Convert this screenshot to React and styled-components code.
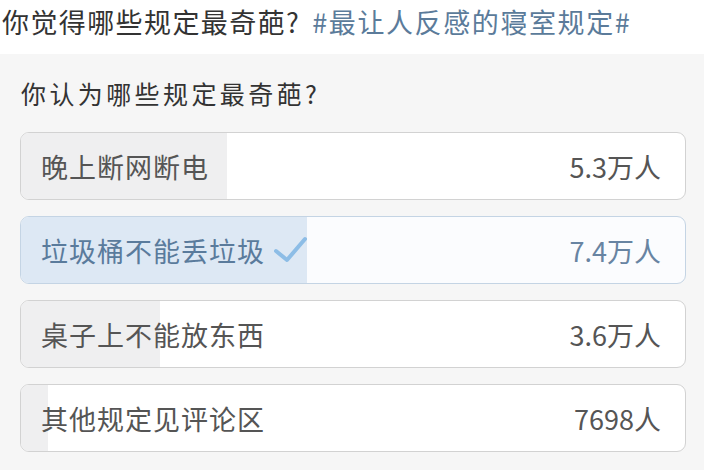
import React from "react";
import styled, { createGlobalStyle } from "styled-components";

const GlobalStyle = createGlobalStyle`
  html, body {
    margin: 0;
    padding: 0;
    background: #f6f6f6;
  }
  body {
    font-family: "Noto Sans CJK SC", "Noto Sans", sans-serif;
  }
`;

const options = [
  { label: "晚上断网断电", count: "5.3万人", ratio: 0.31 },
  { label: "垃圾桶不能丢垃圾", count: "7.4万人", ratio: 0.43, selected: true },
  { label: "桌子上不能放东西", count: "3.6万人", ratio: 0.21 },
  { label: "其他规定见评论区", count: "7698人", ratio: 0.041 },
];

const Check = () => (
  <svg width="34" height="28" viewBox="0 0 34 28">
    <path
      d="M3 16 L14 25 L32 4"
      fill="none"
      stroke="#8dbde6"
      strokeWidth="4"
      strokeLinecap="round"
      strokeLinejoin="round"
    />
  </svg>
);

const App = () => {
  return (
    <>
      <GlobalStyle />
      <Page>
        <Header>
          <Title>你觉得哪些规定最奇葩?</Title>
          <Topic>#最让人反感的寝室规定#</Topic>
        </Header>
        <Panel>
          <Question>你认为哪些规定最奇葩?</Question>
          <List>
            {options.map((o) => (
              <Option key={o.label} $selected={o.selected}>
                <Fill $selected={o.selected} style={{ width: `${o.ratio * 100}%` }} />
                <Label $selected={o.selected}>
                  {o.label}
                  {o.selected && (
                    <CheckWrap>
                      <Check />
                    </CheckWrap>
                  )}
                </Label>
                <Count $selected={o.selected}>{o.count}</Count>
              </Option>
            ))}
          </List>
        </Panel>
      </Page>
    </>
  );
};

const Page = styled.div`
  width: 704px;
  height: 470px;
  display: flex;
  flex-direction: column;
  overflow: hidden;
`;

const Header = styled.div`
  height: 54px;
  background: #ffffff;
  display: flex;
  align-items: center;
  padding: 0 0 12px 2px;
  box-sizing: border-box;
  white-space: nowrap;
`;

const Title = styled.span`
  font-size: 27px;
  letter-spacing: 1.4px;
  color: #333333;
  margin-right: 12px;
`;

const Topic = styled.span`
  font-size: 27px;
  letter-spacing: 1.6px;
  color: #5b7b9a;
`;

const Panel = styled.div`
  flex: 1;
  background: #f6f6f6;
  padding: 0 18px 0 20px;
`;

const Question = styled.div`
  height: 78px;
  display: flex;
  align-items: center;
  padding-left: 1px;
  font-size: 25px;
  letter-spacing: 3.4px;
  color: #333333;
`;

const List = styled.div`
  display: flex;
  flex-direction: column;
  gap: 16px;
`;

const Option = styled.div`
  position: relative;
  height: 68px;
  box-sizing: border-box;
  border: 1px solid ${(p) => (p.$selected ? "#c4d4e4" : "#d2d2d2")};
  border-radius: 9px;
  background: ${(p) => (p.$selected ? "#fbfcfe" : "#ffffff")};
  overflow: hidden;
  display: flex;
  align-items: center;
  justify-content: space-between;
  padding: 0 24px 0 20px;
`;

const Fill = styled.div`
  position: absolute;
  left: 0;
  top: 0;
  bottom: 0;
  background: ${(p) => (p.$selected ? "#dde8f4" : "#efeff0")};
`;

const Label = styled.div`
  position: relative;
  display: flex;
  align-items: center;
  font-size: 27px;
  letter-spacing: 1px;
  color: ${(p) => (p.$selected ? "#5a7b9c" : "#555555")};
`;

const CheckWrap = styled.span`
  display: flex;
  margin-left: 8px;
  margin-top: -2px;
`;

const Count = styled.div`
  position: relative;
  font-size: 27px;
  color: ${(p) => (p.$selected ? "#6884a2" : "#555555")};
`;

export default App;
